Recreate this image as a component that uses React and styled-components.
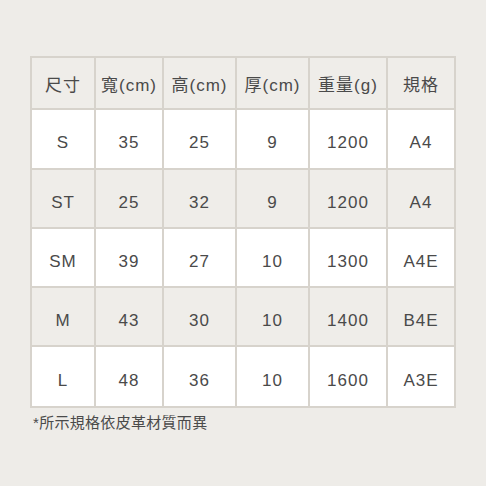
import React from "react";
import styled, { createGlobalStyle } from "styled-components";

const Global = createGlobalStyle`
  html, body { margin: 0; padding: 0; background: #eeece8; }
  body { font-family: "Liberation Sans", "Noto Sans CJK TC", sans-serif; color: #444; }
`;

const Page = styled.div`
  width: 486px;
  height: 486px;
  box-sizing: border-box;
  padding: 56px 0 0 30px;
`;

const Grid = styled.div`
  display: grid;
  grid-template-columns: 62px 66px 71px 71px 76px 66px;
  grid-template-rows: 50px 58px 57px 57px 57px 59px;
  gap: 2px;
  padding: 2px;
  width: max-content;
  background: #d7d3cc;
`;

const Cell = styled.div`
  display: flex;
  align-items: center;
  justify-content: center;
  padding-top: ${(p) => (p.$head ? "1px" : "8px")};
  box-sizing: border-box;
  background: ${(p) => (p.$shade ? "#efede9" : "#ffffff")};
  font-size: 17px;
  letter-spacing: 1px;
  color: #4a4a4a;
  white-space: nowrap;
`;

const Note = styled.div`
  margin: 5px 0 0 3px;
  font-size: 15px;
  line-height: 20px;
  letter-spacing: 0.3px;
  color: #4a4a4a;
`;

const headers = ["尺寸", "寬(cm)", "高(cm)", "厚(cm)", "重量(g)", "規格"];
const rows = [
  ["S", "35", "25", "9", "1200", "A4"],
  ["ST", "25", "32", "9", "1200", "A4"],
  ["SM", "39", "27", "10", "1300", "A4E"],
  ["M", "43", "30", "10", "1400", "B4E"],
  ["L", "48", "36", "10", "1600", "A3E"],
];

export default function App() {
  return (
    <Page>
      <Global />
      <Grid>
        {headers.map((h) => (
          <Cell key={h} $head $shade>
            {h}
          </Cell>
        ))}
        {rows.map((r, i) =>
          r.map((v, j) => (
            <Cell key={`${i}-${j}`} $shade={i % 2 === 1}>
              {v}
            </Cell>
          ))
        )}
      </Grid>
      <Note>*所示規格依皮革材質而異</Note>
    </Page>
  );
}
